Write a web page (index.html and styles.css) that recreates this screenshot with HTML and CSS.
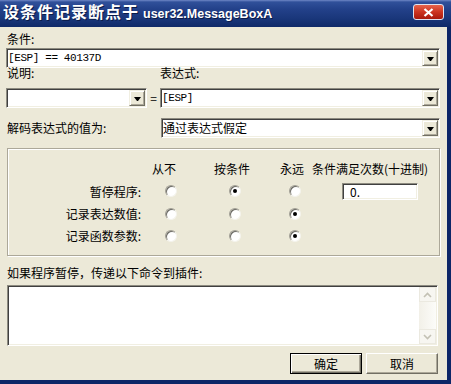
FILE: index.html
```html
<!DOCTYPE html>
<html lang="zh-CN">
  <head>
    <meta charset="UTF-8" />
    <title>设条件记录断点于 user32.MessageBoxA</title>
    <link rel="stylesheet" href="styles.css">
  </head>
  <body>
    <div class="window">
      <div class="titlebar">
        <div class="title"><span class="title-cn">设条件记录断点于</span><span class="title-en">user32.MessageBoxA</span></div>
        <div class="close-btn">
          <svg width="11" height="9" viewBox="0 0 11 9"><path d="M1.5 1 L9.5 8 M9.5 1 L1.5 8" stroke="#fff" stroke-width="2.2" fill="none"/></svg>
        </div>
      </div>
      <div class="frame">
        <div class="client">
          <div class="label">条件:</div>
          <div class="combo combo-cond">
            <span class="combo-text mono">[ESP] == 40137D</span>
            <span class="drop"></span>
          </div>

          <div class="row-labels">
            <span class="label note-label">说明:</span>
            <span class="label">表达式:</span>
          </div>
          <div class="row-combos">
            <div class="combo combo-note">
              <span class="combo-text"></span>
              <span class="drop"></span>
            </div>
            <span class="equals">=</span>
            <div class="combo combo-expr">
              <span class="combo-text mono">[ESP]</span>
              <span class="drop"></span>
            </div>
          </div>

          <div class="row-decode">
            <span class="label decode-label">解码表达式的值为:</span>
            <div class="combo combo-decode">
              <span class="combo-text">通过表达式假定</span>
              <span class="drop"></span>
            </div>
          </div>

          <div class="group">
            <span></span>
            <span class="head head-first">从不</span>
            <span class="head">按条件</span>
            <span class="head">永远</span>
            <span class="head">条件满足次数(十进制)</span>

            <span class="row-label">暂停程序:</span>
            <span class="radio r2"></span>
            <span class="radio r3 on"></span>
            <span class="radio r4"></span>
            <span class="edit">0.</span>

            <span class="row-label">记录表达数值:</span>
            <span class="radio r2"></span>
            <span class="radio r3"></span>
            <span class="radio r4 on"></span>
            <span></span>

            <span class="row-label">记录函数参数:</span>
            <span class="radio r2"></span>
            <span class="radio r3"></span>
            <span class="radio r4 on"></span>
            <span></span>
          </div>

          <div class="label pause-label">如果程序暂停，传递以下命令到插件:</div>
          <div class="memo">
            <div class="memo-area"></div>
            <div class="vscroll">
              <span class="sb-btn">
                <svg width="9" height="6" viewBox="0 0 9 6"><path d="M1 5 L4.5 1.5 L8 5" stroke="#c3c1b4" stroke-width="1.6" fill="none"/></svg>
              </span>
              <span class="sb-track"></span>
              <span class="sb-btn">
                <svg width="9" height="6" viewBox="0 0 9 6"><path d="M1 1 L4.5 4.5 L8 1" stroke="#c3c1b4" stroke-width="1.6" fill="none"/></svg>
              </span>
            </div>
          </div>

          <div class="buttons">
            <button class="btn btn-default">确定</button>
            <button class="btn">取消</button>
          </div>
        </div>
      </div>
    </div>
  </body>
</html>
```

FILE: styles.css
```css
body {
  margin: 0;
  background-color: #ece9d8;
  font-family: "Noto Sans CJK SC", sans-serif;
  font-size: 12px;
  color: #000;
}

.window {
  width: 451px;
  height: 384px;
  display: flex;
  flex-direction: column;
}

/* title bar */
.titlebar {
  height: 27px;
  flex: none;
  display: flex;
  justify-content: space-between;
  padding: 0 7px 0 3px;
  box-sizing: border-box;
  background: linear-gradient(#6f87c6 0, #30509a 2px, #23418a 9px, #1a377b 18px, #0f2a69 27px);
  color: #fff;
}

.title {
  display: flex;
  align-items: baseline;
  font-weight: bold;
  line-height: 22px;
  text-shadow: 1px 1px #0a1a48;
}

.title-cn {
  font-size: 16px;
  letter-spacing: 1px;
}

.title-en {
  font-family: "Liberation Sans", sans-serif;
  font-size: 12.5px;
  margin-left: 4px;
}

.close-btn {
  width: 31px;
  height: 16px;
  margin-top: 4px;
  box-sizing: border-box;
  border: 1px solid #dfe3f0;
  border-radius: 3px;
  background: linear-gradient(#e6634c, #cc3420 50%, #a9190c);
  display: flex;
  align-items: center;
  justify-content: center;
}

/* window body */
.frame {
  flex: 1;
  display: flex;
  border-right: 4px solid #0d2667;
  border-bottom: 4px solid #0d2667;
}

.client {
  flex: 1;
  padding: 4px 7px 0 6px;
}

.label {
  line-height: 16px;
  padding-left: 1px;
  white-space: nowrap;
}

.mono {
  font-family: "Liberation Mono", monospace;
  font-size: 11px;
  letter-spacing: -0.4px;
}

/* combo boxes */
.combo {
  height: 20px;
  box-sizing: border-box;
  display: flex;
  align-items: center;
  background: #fff;
  border: 1px solid;
  border-color: #8d8b80 #fff #fff #8d8b80;
  box-shadow: inset 1px 1px #404040, inset -1px -1px #f1efe2;
  padding: 1px;
}

.combo-cond {
  margin-top: 1px;
}

.combo-text {
  flex: 1;
  line-height: 16px;
  white-space: nowrap;
  overflow: hidden;
}

.drop {
  width: 16px;
  height: 16px;
  box-sizing: border-box;
  background: #ece9d8;
  border: 1px solid;
  border-color: #f1efe2 #716f64 #716f64 #f1efe2;
  box-shadow: inset 1px 1px #fff, inset -1px -1px #aca899;
  display: flex;
  align-items: center;
  justify-content: center;
}

.drop::after {
  content: "";
  width: 1px;
  height: 0;
  border-top: 4px solid #000;
  border-left: 3px solid transparent;
  border-right: 3px solid transparent;
  margin-top: 1px;
}

.row-labels {
  display: flex;
  margin-top: -1px;
}

.row-labels .label {
  line-height: 12px;
  padding-left: 0;
}

.note-label {
  width: 154px;
  box-sizing: border-box;
  padding-left: 1px !important;
}

.row-combos {
  display: flex;
  margin-top: 9px;
}

.combo-note {
  width: 141px;
}

.equals {
  width: 13px;
  text-align: center;
  line-height: 20px;
}

.combo-expr {
  flex: 1;
}

.row-decode {
  display: flex;
  align-items: center;
  margin-top: 10px;
}

.decode-label {
  width: 155px;
  box-sizing: border-box;
}

.combo-decode {
  flex: 1;
}

/* options group */
.group {
  margin: 10px 0 0 1px;
  height: 108px;
  box-sizing: border-box;
  border: 1px solid #aca899;
  box-shadow: inset 1px 1px #fff, 1px 1px #fff;
  padding: 8px 0;
  display: grid;
  grid-template-columns: 142px 64px 66px 32px 1fr;
  grid-template-rows: 22px 24px 21px 23px;
  align-items: center;
}

.head {
  white-space: nowrap;
}

.head-first {
  padding-left: 2px;
}

.row-label {
  text-align: right;
  padding-right: 9px;
  white-space: nowrap;
}

.radio {
  width: 12px;
  height: 12px;
  box-sizing: border-box;
  border-radius: 50%;
  background: #fff;
  border: 1px solid;
  border-color: #a19f94 #f4f3ec #f4f3ec #a19f94;
  box-shadow: inset 1px 1px #6b6a64;
  display: flex;
  align-items: center;
  justify-content: center;
}

.radio.on::after {
  content: "";
  width: 4px;
  height: 4px;
  border-radius: 50%;
  background: #000;
}

.r2,
.r3 {
  margin-left: 15px;
}

.r4 {
  margin-left: 9px;
}

.edit {
  margin-left: 30px;
  width: 76px;
  height: 17px;
  box-sizing: border-box;
  background: #fff;
  border: 1px solid;
  border-color: #8d8b80 #fff #fff #8d8b80;
  box-shadow: inset 1px 1px #404040, inset -1px -1px #f1efe2;
  padding-left: 7px;
  line-height: 15px;
}

/* command memo */
.pause-label {
  margin-top: 9px;
}

.memo {
  display: flex;
  margin: 4px 2px 0 1px;
  height: 61px;
  box-sizing: border-box;
  background: #fff;
  border: 1px solid;
  border-color: #8d8b80 #fff #fff #8d8b80;
  box-shadow: inset 1px 1px #404040, inset -1px -1px #f1efe2;
  padding: 1px;
}

.memo-area {
  flex: 1;
}

.vscroll {
  width: 17px;
  display: flex;
  flex-direction: column;
  background: linear-gradient(to right, #f2f0e8, #fcfcf9);
}

.sb-btn {
  height: 15px;
  box-sizing: border-box;
  border: 1px solid #ebe9e0;
  background: #f7f6f1;
  display: flex;
  align-items: center;
  justify-content: center;
}

.sb-track {
  flex: 1;
}

/* buttons */
.buttons {
  display: flex;
  justify-content: flex-end;
  gap: 4px;
  margin-top: 7px;
  padding-right: 2px;
}

.btn {
  width: 72px;
  height: 21px;
  padding: 0;
  font-family: "Noto Sans CJK SC", sans-serif;
  font-size: 12px;
  color: #000;
  background: #ece9d8;
  border: 1px solid;
  border-color: #fff #716f64 #716f64 #fff;
  box-shadow: inset -1px -1px #aca899;
}

.btn-default {
  border-color: #000;
  box-shadow: inset 1px 1px #fff, inset -1px -1px #716f64, inset -2px -2px #aca899;
}
```
